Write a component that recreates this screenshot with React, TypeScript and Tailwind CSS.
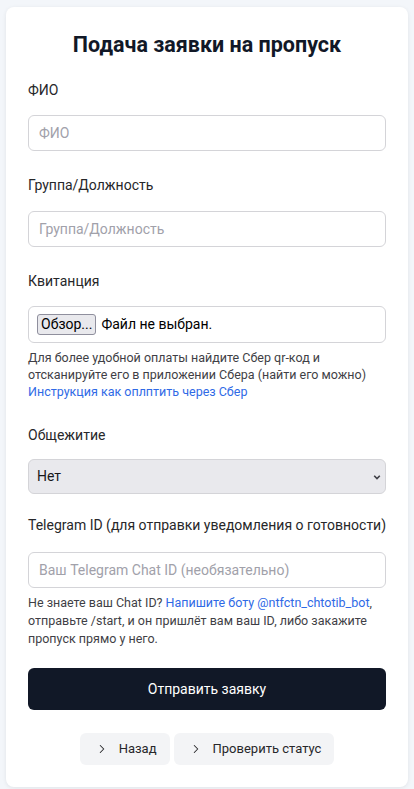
import { ChevronRight } from 'lucide-react';

const font = { fontFamily: 'Roboto, "Noto Sans", sans-serif' };

const inputBase =
  'block w-full h-[36px] rounded-md border border-[#d4d4d8] bg-white px-[10px] text-[14px] text-[#212529] ' +
  'placeholder-[#a1a1aa] outline-none';

function Label({ children, className = '' }: { children: React.ReactNode; className?: string }) {
  return <label className={'block text-[14px] leading-[20px] text-[#27272a] ' + className}>{children}</label>;
}

export default function App() {
  return (
    <div className="min-h-screen bg-[#f3f6fa] px-[6px] pt-[7px] pb-[4px]" style={font}>
      <form className="rounded-lg bg-white px-[22px] pt-[24px] pb-[22px] shadow-[0_1px_4px_rgba(0,0,0,0.08)]">
        <h1 className="text-center text-[21.5px] font-bold leading-[28px] text-[#111827]">
          Подача заявки на пропуск
        </h1>

        <Label className="mt-[21px]">ФИО</Label>
        <input type="text" placeholder="ФИО" className={inputBase + ' mt-[15px]'} />

        <Label className="mt-[24px]">Группа/Должность</Label>
        <input type="text" placeholder="Группа/Должность" className={inputBase + ' mt-[16px] h-[35px]'} />

        <Label className="mt-[24px]">Квитанция</Label>
        <div className="mt-[15px] flex h-[37px] items-center gap-[5px] rounded-md border border-[#d4d4d8] bg-white px-[8px]">
          <button
            type="button"
            className="h-[21px] rounded-[3px] border border-[#8f8f9d] bg-[#e9e9ed] px-[3px] text-[14px] leading-[19px] text-black"
          >
            Обзор...
          </button>
          <span className="text-[14px] text-black">Файл не выбран.</span>
        </div>
        <p className="mt-[6px] text-[12.5px] leading-[17px] text-[#3f3f46]">
          Для более удобной оплаты найдите Сбер qr-код и отсканируйте его в приложении Сбера (найти его можно)
          <br />
          <a href="#" className="text-[#2f6ae6]">
            Инструкция как оплптить через Сбер
          </a>
        </p>

        <Label className="mt-[25px]">Общежитие</Label>
        <div className="relative mt-[14px]">
          <select className="block h-[35px] w-full appearance-none rounded-md border border-[#d4d4d8] bg-[#e9e9ed] px-[8px] text-[14px] text-[#18181b] outline-none">
            <option>Нет</option>
            <option>Да</option>
          </select>
          <svg
            className="pointer-events-none absolute right-[5px] top-[14px] h-[8px] w-[8px] text-[#3f3f46]"
            viewBox="0 0 10 10"
            fill="none"
            stroke="currentColor"
            strokeWidth="2"
          >
            <path d="M1.5 3.5 5 7l3.5-3.5" />
          </svg>
        </div>

        <Label className="mt-[21px] whitespace-nowrap text-[13.4px]">
          Telegram ID (для отправки уведомления о готовности)
        </Label>
        <input
          type="text"
          placeholder="Ваш Telegram Chat ID (необязательно)"
          className={inputBase + ' mt-[17px]'}
        />
        <p className="mt-[6px] text-[12.5px] leading-[18px] text-[#3f3f46]">
          Не знаете ваш Chat ID? <a href="#" className="text-[#2f6ae6]">Напишите боту @ntfctn_chtotib_bot</a>,
          отправьте /start, и он пришлёт вам ваш ID, либо закажите пропуск прямо у него.
        </p>

        <button
          type="submit"
          className="mt-[20px] block h-[42px] w-full rounded-md bg-[#111827] text-[14px] text-white"
        >
          Отправить заявку
        </button>

        <div className="mt-[23px] flex justify-center gap-[4px]">
          <button type="button" className="flex h-[32px] items-center gap-[10px] rounded-md bg-[#f3f4f6] pl-[15px] pr-[13px] text-[13px] text-[#27272a]">
            <ChevronRight size={14} strokeWidth={1.75} />
            Назад
          </button>
          <button type="button" className="flex h-[32px] items-center gap-[10px] rounded-md bg-[#f3f4f6] pl-[15px] pr-[13px] text-[13px] text-[#27272a]">
            <ChevronRight size={14} strokeWidth={1.75} />
            Проверить статус
          </button>
        </div>
      </form>
    </div>
  );
}
